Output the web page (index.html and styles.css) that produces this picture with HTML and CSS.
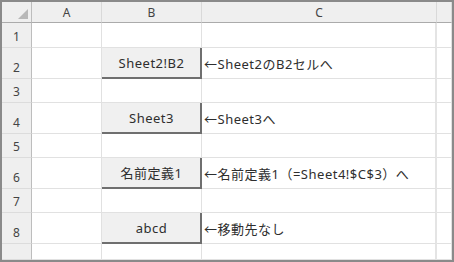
FILE: index.html
```html
<!DOCTYPE html>
<html lang="ja">
<head>
    <meta charset="UTF-8">
    <title>Hyperlink sample</title>
    <link rel="stylesheet" href="styles.css">
</head>
<body>
    <div class="sheet">
        <div class="corner"><span class="tri"></span></div>
        <div class="col-head">A</div>
        <div class="col-head">B</div>
        <div class="col-head">C</div>
        <div class="col-head"></div>

        <div class="row-head">1</div>
        <div class="cell"></div><div class="cell"></div><div class="cell"></div><div class="cell"></div>

        <div class="row-head">2</div>
        <div class="cell"></div>
        <div class="cell btn">Sheet2!B2</div>
        <div class="cell note">←Sheet2のB2セルへ</div>
        <div class="cell"></div>

        <div class="row-head">3</div>
        <div class="cell"></div><div class="cell"></div><div class="cell"></div><div class="cell"></div>

        <div class="row-head">4</div>
        <div class="cell"></div>
        <div class="cell btn">Sheet3</div>
        <div class="cell note">←Sheet3へ</div>
        <div class="cell"></div>

        <div class="row-head">5</div>
        <div class="cell"></div><div class="cell"></div><div class="cell"></div><div class="cell"></div>

        <div class="row-head">6</div>
        <div class="cell"></div>
        <div class="cell btn">名前定義1</div>
        <div class="cell note">←名前定義1（=Sheet4!$C$3）へ</div>
        <div class="cell"></div>

        <div class="row-head">7</div>
        <div class="cell"></div><div class="cell"></div><div class="cell"></div><div class="cell"></div>

        <div class="row-head">8</div>
        <div class="cell"></div>
        <div class="cell btn">abcd</div>
        <div class="cell note">←移動先なし</div>
        <div class="cell"></div>

        <div class="row-head cut">9</div>
        <div class="cell"></div><div class="cell"></div><div class="cell"></div><div class="cell"></div>
    </div>
</body>
</html>
```

FILE: styles.css
```css
* {
    box-sizing: border-box;
}

body {
    margin: 0;
    background: #fff;
    font-family: "Noto Sans", "Noto Sans CJK JP", sans-serif;
    color: #333;
}

.sheet {
    width: 454px;
    height: 262px;
    border: 2px solid #8a8a8a;
    display: grid;
    grid-template-columns: 30px 70px 100px 235px 1fr;
    grid-template-rows: 21px 25px 31px 24px 31px 24px 31px 24px 31px 1fr;
    overflow: hidden;
}

.corner,
.col-head {
    background: #efefef;
    border-bottom: 1px solid #ababab;
    border-right: 1px solid #d9d9d9;
}

.corner {
    display: flex;
    justify-content: flex-end;
    align-items: flex-end;
    padding: 0 3px 3px 0;
    border-right-color: #bdbdbd;
}

.tri {
    width: 0;
    height: 0;
    border-left: 10px solid transparent;
    border-bottom: 10px solid #b8b8b8;
}

.col-head {
    font-size: 12px;
    color: #444;
    display: flex;
    align-items: center;
    justify-content: center;
}

.row-head {
    background: #efefef;
    border-right: 1px solid #bdbdbd;
    border-bottom: 1px solid #dcdcdc;
    font-size: 12px;
    color: #444;
    display: flex;
    align-items: flex-end;
    justify-content: center;
    padding-bottom: 2px;
}

/* last row is clipped by the window, only the top of the digit shows */
.row-head.cut {
    align-items: flex-start;
    padding-top: 11px;
    overflow: hidden;
}

.cell {
    border-right: 1px solid #e1e1e1;
    border-bottom: 1px solid #e1e1e1;
    font-size: 13px;
    letter-spacing: 0.5px;
    display: flex;
    align-items: center;
}

.cell:nth-child(5n+4) {
    border-right: 2px solid #e4e4e4;
}

.btn {
    background: #f0f0f0;
    border-right: 2px solid #6f6f6f;
    border-bottom: 2px solid #6f6f6f;
    justify-content: center;
    padding-left: 1px;
    color: #2e2e2e;
}

.note {
    padding-left: 2px;
    white-space: nowrap;
    color: #2e2e2e;
}
```
